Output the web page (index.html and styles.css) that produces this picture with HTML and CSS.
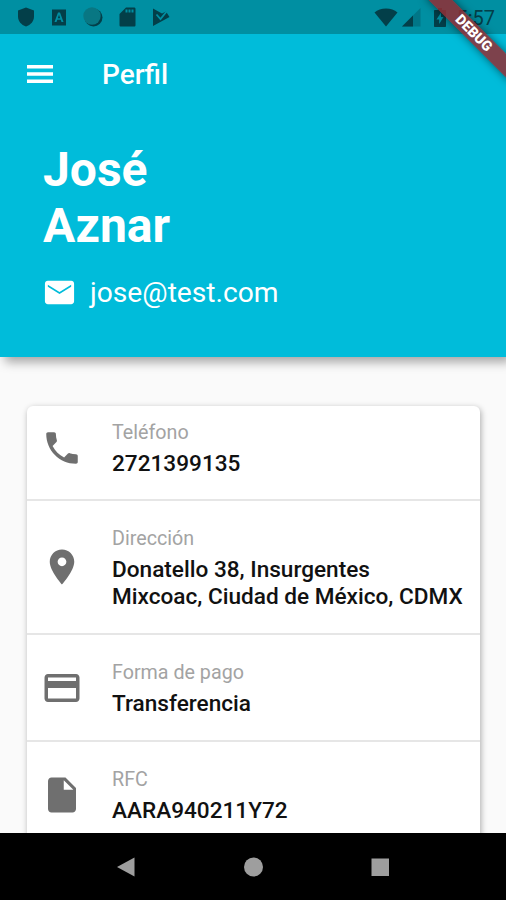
FILE: index.html
```html
<!DOCTYPE html>
<html lang="es">
<head>
  <meta charset="UTF-8" />
  <meta name="viewport" content="width=device-width, initial-scale=1.0"/>
  <title>Perfil</title>
  <link rel="stylesheet" href="styles.css">
</head>
<body>

<div class="screen">
  <header class="header">
    <div class="status-bar">
      <div class="status-left">
        <svg width="18" height="20" viewBox="0 0 18 20"><path d="M9 0.5l8 3v6c0 4.800-3.200 8.300-8 10-4.800-1.700-8-5.200-8-10v-6z"/></svg>
        <svg width="16" height="17" viewBox="0 0 16 17"><path fill-rule="evenodd" d="M1 0.500h14v16h-14zM7 3.500L3.500 13h2l.8-2.300h3.400l.8 2.300h2L9 3.500zM8 5.800l1.200 3.400H6.800z"/></svg>
        <svg width="20" height="20" viewBox="0 0 20 20"><circle cx="10.500" cy="10.500" r="9"/><circle cx="9" cy="9" r="8.700" class="soft"/></svg>
        <svg width="17" height="20" viewBox="0 0 17 20"><path fill-rule="evenodd" d="M7 0.500h8c1 0 1.500.5 1.500 1.500v16c0 1-.5 1.500-1.500 1.500H2c-1 0-1.500-.5-1.500-1.500V7zM6.500 2.500v3h2v-3zM9.500 2.500v3h2v-3zM12.500 2.500v3h2v-3z"/></svg>
        <svg width="18" height="19" viewBox="0 0 18 19"><path d="M1 0.500l9 5 4-2 3.500 5.500L1 18z"/><path d="M4.500 6.500l4 4.500 6.500-8" class="check"/></svg>
      </div>
      <div class="status-right">
        <svg width="24" height="19" viewBox="0 0 24 19"><path d="M12 18.500L.5 4.500C3.500 1.800 7.500.5 12 .5s8.500 1.300 11.500 4z"/></svg>
        <svg class="signal" width="19" height="19" viewBox="0 0 19 19"><path d="M18.500 0v18.500H0z" opacity=".3"/><path d="M11 7.500v11H0z"/></svg>
        <svg class="battery" width="12" height="19" viewBox="0 0 12 19"><path fill-rule="evenodd" d="M4 0h4v2h3c.6 0 1 .4 1 1v15c0 .6-.4 1-1 1H1c-.6 0-1-.4-1-1V3c0-.6.4-1 1-1h3zM7 4.500L2.500 11.500h2.700v4.500L9.500 9H7z"/></svg>
        <span class="time">5:57</span>
      </div>
    </div>

    <div class="app-bar">
      <svg class="menu" width="26" height="18" viewBox="0 0 26 18"><path d="M0 0h26v3.500H0zM0 7.200h26v3.500H0zM0 14.400h26v3.500H0z"/></svg>
      <h1>Perfil</h1>
    </div>

    <div class="profile">
      <h2>José<br>Aznar</h2>
      <p class="email">
        <svg width="35" height="35" viewBox="0 0 24 24"><path d="M20 4H4c-1.100 0-1.990.9-1.990 2L2 18c0 1.100.9 2 2 2h16c1.100 0 2-.9 2-2V6c0-1.100-.9-2-2-2zm0 4l-8 5-8-5V6.700l8 5 8-5z"/></svg>
        <span>jose@test.com</span>
      </p>
    </div>
  </header>

  <main class="content">
    <div class="card">
      <div class="row first">
        <svg class="icon" viewBox="0 0 24 24"><path d="M6.620 10.790c1.440 2.830 3.760 5.140 6.590 6.590l2.200-2.200c.27-.27.67-.36 1.020-.24 1.120.37 2.330.57 3.570.57.550 0 1 .45 1 1V20c0 .55-.45 1-1 1-9.390 0-17-7.610-17-17 0-.55.45-1 1-1h3.500c.55 0 1 .45 1 1 0 1.250.2 2.450.57 3.570.11.350.030.740-.25 1.020l-2.200 2.200z"/></svg>
        <div class="info">
          <p class="label">Teléfono</p>
          <p class="value">2721399135</p>
        </div>
      </div>
      <div class="row">
        <svg class="icon" viewBox="0 0 24 24"><path d="M12 2C8.130 2 5 5.130 5 9c0 5.250 7 13 7 13s7-7.750 7-13c0-3.870-3.130-7-7-7zm0 9.500c-1.380 0-2.500-1.120-2.500-2.500s1.120-2.500 2.500-2.500 2.500 1.120 2.500 2.500-1.120 2.500-2.500 2.500z"/></svg>
        <div class="info">
          <p class="label">Dirección</p>
          <p class="value">Donatello 38, Insurgentes<br>Mixcoac, Ciudad de México, CDMX</p>
        </div>
      </div>
      <div class="row">
        <svg class="icon" viewBox="0 0 24 24"><path d="M20 4H4c-1.110 0-1.990.89-1.990 2L2 18c0 1.110.89 2 2 2h16c1.110 0 2-.89 2-2V6c0-1.110-.89-2-2-2zm0 14H4v-6h16v6zm0-10H4V6h16v2z"/></svg>
        <div class="info">
          <p class="label">Forma de pago</p>
          <p class="value">Transferencia</p>
        </div>
      </div>
      <div class="row">
        <svg class="icon" viewBox="0 0 24 24"><path d="M6 2c-1.100 0-1.990.9-1.990 2L4 20c0 1.100.89 2 1.990 2H18c1.100 0 2-.9 2-2V8l-6-6H6zm7 7V3.500L18.500 9H13z"/></svg>
        <div class="info">
          <p class="label">RFC</p>
          <p class="value">AARA940211Y72</p>
        </div>
      </div>
    </div>
  </main>

  <nav class="nav-bar">
    <svg width="20" height="20" viewBox="0 0 20 20"><path d="M18.500.5v19L1 10z"/></svg>
    <svg width="20" height="20" viewBox="0 0 20 20"><circle cx="10.500" cy="10" r="9.500"/></svg>
    <svg width="20" height="20" viewBox="0 0 20 20"><path d="M1.500 1.500h17.500v17.500H1.500z"/></svg>
  </nav>

  <div class="debug">DEBUG</div>
</div>

</body>
</html>
```

FILE: styles.css
```css
* {
  box-sizing: border-box;
}
body {
  font-family: Roboto, sans-serif;
  margin: 0;
  background: #fafafa;
}
h1, h2, p {
  margin: 0;
}
svg {
  display: block;
  flex-shrink: 0;
}
.screen {
  position: relative;
  display: flex;
  flex-direction: column;
  height: 900px;
  overflow: hidden;
}
.header {
  height: 357px;
  flex-shrink: 0;
  background: #00bcda;
  color: #fff;
  fill: #fff;
  box-shadow: 5px 5px 10px rgba(0, 0, 0, 0.35);
}
.status-bar {
  display: flex;
  justify-content: space-between;
  align-items: center;
  height: 34px;
  padding: 0 11px 0 17px;
  background: #008fa2;
  color: #033f49;
  fill: #033f49;
}
.status-left, .status-right {
  display: flex;
  align-items: center;
}
.status-left {
  gap: 16px;
}
.soft {
  fill: #087783;
}
.check {
  fill: none;
  stroke: #008fa2;
  stroke-width: 1.8;
}
.signal {
  margin-left: 4px;
}
.battery {
  margin-left: 13px;
}
.time {
  margin-left: 10px;
  font-size: 20px;
  line-height: 34px;
  padding-top: 1px;
}
.app-bar {
  display: flex;
  align-items: center;
  height: 79px;
  padding-left: 27px;
}
.app-bar h1 {
  margin-left: 49px;
  padding-top: 2px;
  font-size: 28px;
  font-weight: 500;
  line-height: 34px;
}
.profile {
  padding: 29px 43px 0 42px;
}
.profile h2 {
  padding-left: 1px;
  font-size: 48px;
  font-weight: 700;
  line-height: 56px;
}
.email {
  display: flex;
  align-items: center;
  margin-top: 20px;
  font-size: 28.200px;
  line-height: 36px;
}
.email span {
  margin-left: 13px;
  padding-top: 1px;
}
.content {
  flex: 1;
  min-height: 0;
  padding: 49px 26px 0 27px;
  overflow: hidden;
}
.card {
  height: 500px;
  background: #fff;
  border-radius: 6px;
  box-shadow: 1px 2px 6px rgba(0, 0, 0, 0.32);
}
.row {
  display: flex;
  align-items: center;
  height: 107px;
  padding-left: 14px;
  border-bottom: 2px solid #e6e6e6;
}
.row.first {
  height: 95px;
  padding-bottom: 10px;
}
.row:nth-child(2) {
  height: 134px;
}
.row:last-child {
  padding-bottom: 2px;
  border-bottom: none;
}
.icon {
  width: 42px;
  height: 42px;
  fill: #6f6f6f;
}
.info {
  margin-left: 29px;
  padding-top: 3px;
}
.label {
  font-size: 19.700px;
  font-weight: 400;
  line-height: 24px;
  color: #a3a3a3;
}
.value {
  margin-top: 6px;
  font-size: 22.600px;
  font-weight: 500;
  line-height: 26.500px;
  white-space: nowrap;
  color: #111;
}
.nav-bar {
  display: flex;
  justify-content: center;
  align-items: center;
  gap: 107px;
  height: 67px;
  flex-shrink: 0;
  position: relative;
  background: #000;
  fill: #9e9e9e;
}
/* corner ribbon, sits over the status bar */
.debug {
  position: absolute;
  top: 25px;
  right: -28px;
  width: 120px;
  height: 17px;
  transform: rotate(45deg);
  background: rgba(145, 45, 52, 0.86);
  box-shadow: 0 0 8px rgba(0, 0, 0, 0.5);
  color: #fff;
  font-size: 14.200px;
  font-weight: 900;
  line-height: 17px;
  text-align: center;
  text-indent: -1px;
}
```
